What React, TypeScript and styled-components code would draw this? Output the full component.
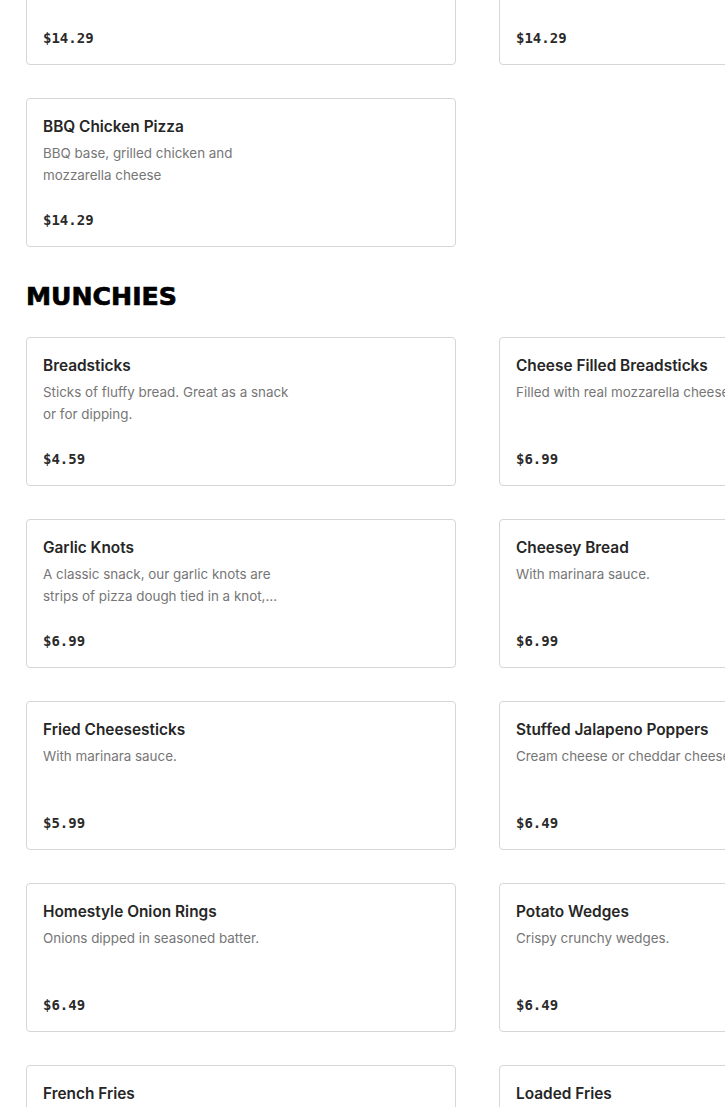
import React from 'react'
import styled, { createGlobalStyle } from 'styled-components'

interface Item {
  title: string
  description: string
  price: string
}

const pizzas: Item[] = [
  { title: 'Pepperoni Pizza', description: 'Classic tomato base, pepperoni and mozzarella cheese', price: '$14.29' },
  { title: 'Margherita Pizza', description: 'Tomato base and mozzarella cheese', price: '$14.29' },
  { title: 'BBQ Chicken Pizza', description: 'BBQ base, grilled chicken and mozzarella cheese', price: '$14.29' },
]

const munchies: Item[] = [
  { title: 'Breadsticks', description: 'Sticks of fluffy bread. Great as a snack or for dipping.', price: '$4.59' },
  { title: 'Cheese Filled Breadsticks', description: 'Filled with real mozzarella cheese.', price: '$6.99' },
  {
    title: 'Garlic Knots',
    description:
      'A classic snack, our garlic knots are strips of pizza dough tied in a knot, baked and brushed with garlic butter.',
    price: '$6.99',
  },
  { title: 'Cheesey Bread', description: 'With marinara sauce.', price: '$6.99' },
  { title: 'Fried Cheesesticks', description: 'With marinara sauce.', price: '$5.99' },
  { title: 'Stuffed Jalapeno Poppers', description: 'Cream cheese or cheddar cheese.', price: '$6.49' },
  { title: 'Homestyle Onion Rings', description: 'Onions dipped in seasoned batter.', price: '$6.49' },
  { title: 'Potato Wedges', description: 'Crispy crunchy wedges.', price: '$6.49' },
  { title: 'French Fries', description: 'Golden, crispy and lightly salted.', price: '$4.99' },
  { title: 'Loaded Fries', description: 'Topped with cheese sauce and bacon bits.', price: '$7.49' },
]

const MenuCard: React.FC<{ item: Item }> = ({ item }) => (
  <Card>
    <Title>{item.title}</Title>
    <Description>{item.description}</Description>
    <Price>{item.price}</Price>
  </Card>
)

const App: React.FC = () => (
  <>
    <GlobalStyle />
    <Page>
      <Grid>
        {pizzas.map(p => (
          <MenuCard key={p.title} item={p} />
        ))}
      </Grid>
      <Heading>MUNCHIES</Heading>
      <Grid>
        {munchies.map(m => (
          <MenuCard key={m.title} item={m} />
        ))}
      </Grid>
    </Page>
  </>
)

export default App

const GlobalStyle = createGlobalStyle`
  html, body {
    margin: 0;
    padding: 0;
    background: #ffffff;
    overflow: hidden;
  }
  body {
    font-family: Inter, "Noto Sans", sans-serif;
  }
`

// page is shown scrolled down: the first pizza row is partly above the fold
const Page = styled('main')`
  margin-top: -84px;
  padding: 0 0 40px 26px;
  width: 1000px;
`

const Grid = styled('div')`
  display: grid;
  grid-template-columns: 430px 430px;
  column-gap: 43px;
  row-gap: 33px;
`

const Card = styled('div')`
  box-sizing: border-box;
  height: 149px;
  border: 1px solid #d6d6d6;
  border-radius: 4px;
  padding: 16px;
  display: flex;
  flex-direction: column;
  background: #fff;
`

const Title = styled('div')`
  font-size: 15.4px;
  line-height: 24px;
  font-weight: 600;
  color: #262626;
  white-space: nowrap;
`

const Description = styled('div')`
  margin-top: 3px;
  height: 44px;
  max-width: 250px;
  font-size: 13.4px;
  line-height: 22px;
  color: #767676;
  display: -webkit-box;
  -webkit-line-clamp: 2;
  -webkit-box-orient: vertical;
  overflow: hidden;
`

const Price = styled('div')`
  margin-top: 24px;
  font-family: "DejaVu Sans Mono", "Liberation Mono", monospace;
  font-size: 14px;
  line-height: 20px;
  font-weight: 700;
  color: #2a2a2a;
`

const Heading = styled('h2')`
  margin: 35px 0 25px;
  font-family: "DejaVu Sans", sans-serif;
  font-size: 25.2px;
  line-height: 30px;
  font-weight: 700;
  color: #000;
  -webkit-text-stroke: 0.7px #000;
`
